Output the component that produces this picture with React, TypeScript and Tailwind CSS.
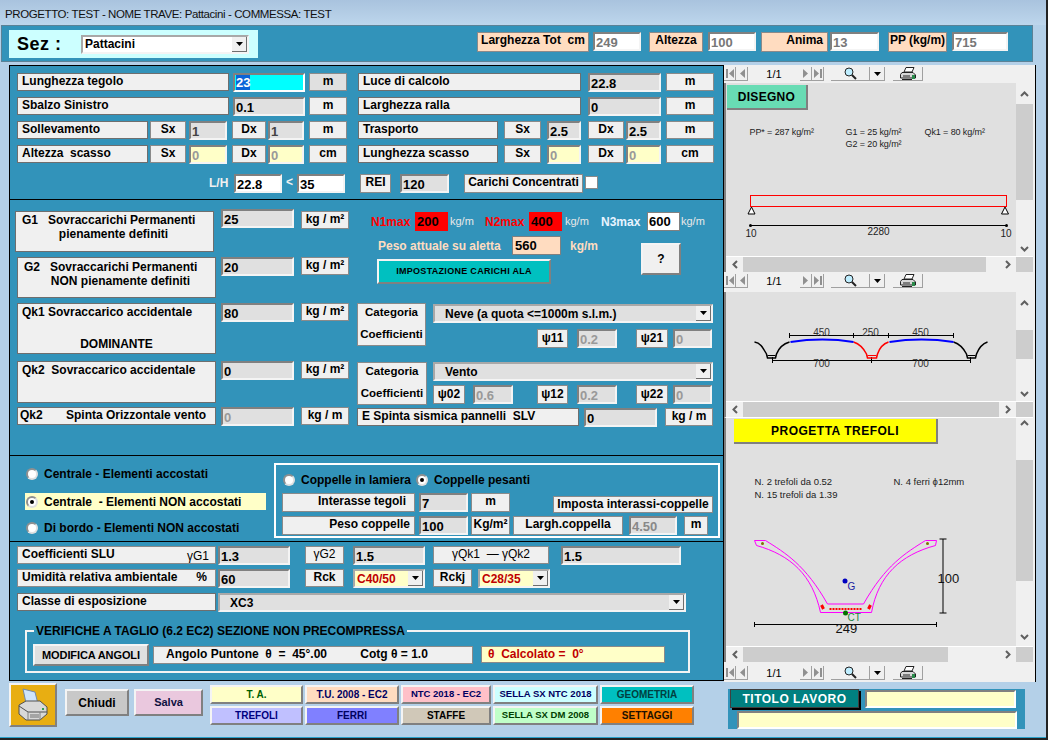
import type { ReactNode } from "react";

const FONT = "font-['Liberation_Sans',Arial,sans-serif]";

function Lbl({ className = "", children }: { className?: string; children?: ReactNode }) {
  return (
    <div className={`shrink-0 h-[18px] bg-[#f0f0f0] border border-[#6e6e6e] pl-[4px] leading-[14px] whitespace-pre overflow-hidden ${className}`}>
      {children}
    </div>
  );
}

function Unit({ className = "", children }: { className?: string; children?: ReactNode }) {
  return (
    <div className={`shrink-0 h-[18px] bg-[#f0f0f0] border border-[#8a8a8a] text-center leading-[14px] whitespace-pre overflow-hidden ${className}`}>
      {children}
    </div>
  );
}

function Val({ className = "", bg = "bg-[#e0e0e0]", color = "text-black", children }: { className?: string; bg?: string; color?: string; children?: ReactNode }) {
  return (
    <div className={`shrink-0 h-[19px] border-2 border-t-[#808080] border-l-[#808080] border-r-[#f4f4f4] border-b-[#f4f4f4] pl-[1px] text-[13px] leading-[17px] overflow-hidden ${bg} ${color} ${className}`}>
      {children}
    </div>
  );
}

function Arrow() {
  return (
    <div className="w-[15px] h-[15px] shrink-0 bg-[#f0f0f0] border-r border-b border-[#6e6e6e] flex items-center justify-center">
      <svg width="7" height="4" viewBox="0 0 7 4"><path d="M0 0h7L3.5 4z" fill="#000" /></svg>
    </div>
  );
}

function Combo({ className = "", text = "text-black pl-[10px]", children }: { className?: string; text?: string; children?: ReactNode }) {
  return (
    <div className={`shrink-0 h-[19px] border-2 border-t-[#a8a8a8] border-l-[#a8a8a8] border-r-[#f4f4f4] border-b-[#f4f4f4] flex items-center justify-between ${className}`}>
      <span className={`text-[12px] ${text}`}>{children}</span>
      <Arrow />
    </div>
  );
}

function Radio({ on = false }: { on?: boolean }) {
  return (
    <div className="w-[12px] h-[12px] shrink-0 rounded-full bg-white border-2 border-t-[#909090] border-l-[#909090] border-r-[#e0e0e0] border-b-[#e0e0e0] flex items-center justify-center">
      {on && <div className="w-[4px] h-[4px] rounded-full bg-black" />}
    </div>
  );
}

function Psi({ className = "", children }: { className?: string; children?: ReactNode }) {
  return (
    <div className={`shrink-0 h-[19px] bg-[#f0f0f0] border border-[#8a8a8a] text-center text-[12px] leading-[17px] ${className}`}>
      <span className="text-[#000]">ψ</span>
      {children}
    </div>
  );
}

function TinyBtn({ d, flip = false }: { d: string; flip?: boolean }) {
  return (
    <div className="w-[12px] h-[14px] bg-[#f0f0f0] border-r border-b border-[#a0a0a0] flex items-center justify-center">
      <svg width="8" height="9" viewBox="0 0 8 9" className={flip ? "-scale-x-100" : ""}><path d={d} fill="#909090" /></svg>
    </div>
  );
}

function Toolbar({ className = "" }: { className?: string }) {
  return (
    <div className={`h-[18px] bg-[#f0f0f0] flex items-center shrink-0 text-black ${className}`}>
      <TinyBtn d="M0 0h2v9H0zM8 0v9L3 4.5z" />
      <TinyBtn d="M7 0v9L2 4.5z" />
      <div className="w-[52px] text-center text-[11px] font-normal">1/1</div>
      <TinyBtn d="M7 0v9L2 4.5z" flip />
      <TinyBtn d="M0 0h2v9H0zM8 0v9L3 4.5z" flip />
      <div className="ml-[7px] w-[39px] h-[14px] bg-[#f0f0f0] border-r border-b border-[#a0a0a0] flex items-center justify-center">
        <svg width="13" height="13" viewBox="0 0 13 13" fill="none">
          <circle cx="5" cy="5" r="4" stroke="#222" fill="#bfeeff" />
          <path d="M8 8l4 4" stroke="#222" strokeWidth="2" />
        </svg>
      </div>
      <div className="w-[15px] h-[14px] bg-[#f0f0f0] border-r border-b border-[#a0a0a0] flex items-center justify-center">
        <svg width="7" height="4" viewBox="0 0 7 4"><path d="M0 0h7L3.5 4z" fill="#000" /></svg>
      </div>
      <div className="ml-[8px] w-[30px] h-[14px] bg-[#f0f0f0] border-r border-b border-[#a0a0a0] flex items-center justify-center">
        <svg width="16" height="13" viewBox="0 0 16 13" fill="none">
          <path d="M6 .5h8L12 5H4z" fill="#fff" stroke="#222" />
          <path d="M2 5.500h11l2.500 2.500v3H.5V7.500z" fill="#d8d8d8" stroke="#222" />
          <path d="M12 8h3v4h-3z" fill="#2a8a4a" />
          <path d="M2 12.500h10M3 9h7" stroke="#222" />
        </svg>
      </div>
    </div>
  );
}

function Chevron({ up = false }: { up?: boolean }) {
  return (
    <svg width="9" height="6" viewBox="0 0 9 6" fill="none" className={up ? "" : "rotate-180"}>
      <path d="M1 5l3.500-3.500L8 5" stroke="#606060" strokeWidth="2" />
    </svg>
  );
}

function HBar({ thumb }: { thumb: string }) {
  return (
    <div className="h-[16px] shrink-0 flex border-t border-white">
      <div className="flex-1 bg-[#f0f0f0] flex items-center">
        <div className="w-[17px] flex justify-center"><svg width="6" height="9" viewBox="0 0 6 9" fill="none"><path d="M5 1 1.500 4.500 5 8" stroke="#606060" strokeWidth="2" /></svg></div>
        <div className="flex-1 h-full"><div className={`h-full bg-[#cdcdcd] ${thumb}`} /></div>
        <div className="w-[17px] flex justify-center"><svg width="6" height="9" viewBox="0 0 6 9" fill="none"><path d="M1 1l3.500 3.500L1 8" stroke="#606060" strokeWidth="2" /></svg></div>
      </div>
      <div className="w-[17px] bg-[#cdcdcd]" />
    </div>
  );
}

function Viewer({ area, scroll, thumb, children }: { area: string; scroll: ReactNode; thumb: string; children: ReactNode }) {
  return (
    <div className={`shrink-0 flex flex-col bg-[#e0e0e0] border-l-2 border-[#808080] ${area}`}>
      <div className="flex-1 flex min-h-0">
        <div className="flex-1 relative overflow-hidden">{children}</div>
        {scroll}
      </div>
      <HBar thumb={thumb} />
    </div>
  );
}

function BeamDrawing() {
  return (
    <svg viewBox="726 83 289 173" className="absolute inset-0 w-full h-full font-normal" fill="none">
      <g fontFamily="'Liberation Sans',Arial,sans-serif" fontSize="9" fill="#222" letterSpacing="-0.1">
        <text x="749" y="135">PP* = 287 kg/m²</text>
        <text x="845" y="135">G1 = 25 kg/m²</text>
        <text x="924" y="135">Qk1 = 80 kg/m²</text>
        <text x="845" y="147">G2 = 20 kg/m²</text>
        <text x="745" y="237" fontSize="10">10</text>
        <text x="867" y="235" fontSize="10">2280</text>
        <text x="1000" y="237" fontSize="10">10</text>
      </g>
      <rect x="750" y="195.500" width="256" height="11" stroke="#f00" />
      <path d="M751 207l-3.500 7h7zM1004.500 207l-3.500 7h7z" stroke="#000" fill="#fff" />
      <path d="M750 225.500h256" stroke="#000" />
      <circle cx="750" cy="225.500" r="1.500" fill="#000" />
      <circle cx="1006" cy="225.500" r="1.500" fill="#000" />
    </svg>
  );
}

function TileDrawing() {
  return (
    <svg viewBox="726 292 289 109" className="absolute inset-0 w-full h-full font-normal" fill="none">
      <g stroke="#000">
        <path d="M789 335.500h164M789 333v5M853 333v5M888 333v5M953 333v5" />
        <path d="M772 360.500h198M772 357v6M871 357v6M970 357v6" />
      </g>
      <path d="M754 342c6 1 8 5 12 12l1 4h8l1-4c2-5 6-10 13-12" stroke="#000" strokeWidth="1.500" />
      <path d="M767 355.500h8" stroke="#000" />
      <path d="M953 342c6 2 10 6 13 12l1 4h8l1-4c2-5 5-10 11-12" stroke="#000" strokeWidth="1.500" />
      <path d="M967 355.500h8" stroke="#000" />
      <path d="M853 342c6 2 10 6 13 12l1 4h9l1-4c2-6 5-10 11-12" stroke="#f00" strokeWidth="1.500" />
      <path d="M867 355.500h9" stroke="#f00" />
      <path d="M790 342c20-3 44-3 63 0M889 342c20-3 44-3 64 0" stroke="#00f" strokeWidth="2" />
      <g fontFamily="'Liberation Sans',Arial,sans-serif" fontSize="10" fill="#333" textAnchor="middle">
        <text x="821" y="336">450</text>
        <text x="870" y="336">250</text>
        <text x="920" y="336">450</text>
        <text x="821" y="367">700</text>
        <text x="920" y="367">700</text>
      </g>
    </svg>
  );
}

function SectionDrawing() {
  return (
    <svg viewBox="726 418 289 228" className="absolute inset-0 w-full h-full font-normal" fill="none">
      <g fontFamily="'Liberation Sans',Arial,sans-serif" fontSize="9.500" fill="#222">
        <text x="754" y="485">N. 2 trefoli da 0.52</text>
        <text x="893" y="485">N. 4 ferri ϕ12mm</text>
        <text x="754" y="498">N. 15 trefoli da 1.39</text>
      </g>
      <path
        d="M754 540.500h11C785 553 805 565 827 604h36C885 565 905 553 925 540.500h11l-1 5C900 555 878 575 871 612.500h-51C812 575 790 555 756 545.500z"
        stroke="#f0f"
      />
      <circle cx="762" cy="543.500" r="1.500" fill="#807000" />
      <circle cx="927" cy="543.500" r="1.500" fill="#807000" />
      <path d="M829 609h32" stroke="#f00" strokeWidth="2" strokeDasharray="2 1" />
      <path d="M821 605l2 4M870 605l-2 4" stroke="#f00" strokeWidth="3" />
      <path d="M942.500 539v74M939 539h7M939 613h7M754 624.500h182M754 622v5M936 622v5" stroke="#000" />
      <circle cx="844.500" cy="581" r="2.500" fill="#0000c0" />
      <circle cx="845" cy="613" r="2.500" fill="#007000" />
      <g fontFamily="'Liberation Sans',Arial,sans-serif">
        <text x="847" y="590" fontSize="10" fill="#2020a0">G</text>
        <text x="847" y="621" fontSize="10" fill="#208040">CT</text>
        <text x="937" y="583" fontSize="13" fill="#111">100</text>
        <text x="835" y="633" fontSize="13" fill="#111">249</text>
      </g>
    </svg>
  );
}

function NavBtn({ className, children }: { className: string; children: ReactNode }) {
  return (
    <div className={`h-[19px] border-2 border-t-[#f4f4f4] border-l-[#f4f4f4] border-r-[#808080] border-b-[#808080] flex items-center justify-center whitespace-nowrap ${className}`}>
      {children}
    </div>
  );
}

export default function App() {
  return (
    <div className={`${FONT} w-[1048px] h-[740px] overflow-hidden bg-[#b4d0e8] text-[12px] font-bold text-black flex flex-col border-b-2 border-r-2 border-[#222] shadow-[inset_0_-1px_0_#2aa0c8]`}>
      {/* title bar */}
      <div className="h-[25px] shrink-0 bg-gradient-to-b from-[#a9c3de] to-[#bdd6ec] pl-[5px] pt-[5px] text-[11.500px] tracking-[-0.4px] font-normal text-[#111] leading-[18px]">
        PROGETTO: TEST - NOME TRAVE: Pattacini - COMMESSA: TEST
      </div>

      {/* top band */}
      <div className="h-[37px] w-[1032px] ml-[1px] shrink-0 bg-[#3293ba] border border-[#5c8296] flex items-start">
        <div className="ml-[7px] mt-[4px] w-[249px] h-[28px] bg-[#ccffff] flex items-center">
          <span className="ml-[8px] w-[64px] text-[18px] tracking-[0.5px]">Sez :</span>
          <Combo className="w-[168px] bg-white" text="text-black pl-[2px]">Pattacini</Combo>
        </div>
        <Unit className="ml-[219px] mt-[6px] w-[112px] !h-[20px] !bg-[#ffdcc0]">Larghezza Tot  cm</Unit>
        <Val className="ml-[4px] mt-[6px] w-[48px]" bg="bg-white" color="text-[#777]">249</Val>
        <Unit className="ml-[8px] mt-[6px] w-[54px] !h-[20px] !bg-[#ffdcc0]">Altezza</Unit>
        <Val className="ml-[5px] mt-[6px] w-[48px]" bg="bg-white" color="text-[#777]">100</Val>
        <div className="ml-[5px] mt-[6px] w-[67px] h-[20px] bg-[#ffdcc0] border border-[#8a8a8a] text-right pr-[4px] leading-[14px]">Anima</div>
        <Val className="ml-[2px] mt-[6px] w-[49px]" bg="bg-white" color="text-[#777]">13</Val>
        <Unit className="ml-[9px] mt-[6px] w-[59px] !h-[20px] !bg-[#ffdcc0]">PP (kg/m)</Unit>
        <Val className="ml-[5px] mt-[6px] w-[56px]" bg="bg-white" color="text-[#777]">715</Val>
      </div>

      <div className="h-[617px] mt-[3px] shrink-0 flex items-start">
        {/* left column */}
        <div className="ml-[9px] w-[715px] shrink-0 flex flex-col">
          {/* dimensions */}
          <div className="h-[134px] bg-[#3293ba] border border-b-0 border-black pl-[7px] pt-[7px] flex flex-col gap-[6px]">
            <div className="flex h-[18px]">
              <Lbl className="w-[212px]">Lunghezza tegolo</Lbl>
              <div className="ml-[4px] w-[72px] h-[19px] bg-[#00ffff] border-2 border-t-[#808080] border-l-[#808080] border-r-white border-b-white pl-[1px] text-[13px] leading-[15px] text-white">
                <span className="bg-[#0a64d8]">23</span>
              </div>
              <Unit className="ml-[4px] w-[38px] !bg-[#e0e0e0]">m</Unit>
              <Lbl className="ml-[11px] w-[223px]">Luce di calcolo</Lbl>
              <Val className="ml-[7px] w-[73px]">22.8</Val>
              <Unit className="ml-[5px] w-[48px]">m</Unit>
            </div>
            <div className="flex h-[18px]">
              <Lbl className="w-[212px]">Sbalzo Sinistro</Lbl>
              <Val className="ml-[4px] w-[72px]">0.1</Val>
              <Unit className="ml-[4px] w-[38px]">m</Unit>
              <Lbl className="ml-[11px] w-[223px]">Larghezza ralla</Lbl>
              <Val className="ml-[7px] w-[73px]">0</Val>
              <Unit className="ml-[5px] w-[48px]">m</Unit>
            </div>
            <div className="flex h-[18px]">
              <Lbl className="w-[131px]">Sollevamento</Lbl>
              <Unit className="ml-[2px] w-[36px]">Sx</Unit>
              <Val className="ml-[3px] w-[38px]" color="text-[#444]">1</Val>
              <Unit className="ml-[5px] w-[34px]">Dx</Unit>
              <Val className="ml-[2px] w-[36px]" color="text-[#444]">1</Val>
              <Unit className="ml-[5px] w-[38px]">m</Unit>
              <Lbl className="ml-[11px] w-[140px]">Trasporto</Lbl>
              <Unit className="ml-[6px] w-[37px]">Sx</Unit>
              <Val className="ml-[6px] w-[34px]">2.5</Val>
              <Unit className="ml-[7px] w-[36px]">Dx</Unit>
              <Val className="ml-[2px] w-[35px]">2.5</Val>
              <Unit className="ml-[5px] w-[48px]">m</Unit>
            </div>
            <div className="flex h-[18px]">
              <Lbl className="w-[131px]">Altezza  scasso</Lbl>
              <Unit className="ml-[2px] w-[36px]">Sx</Unit>
              <Val className="ml-[3px] w-[38px]" bg="bg-[#ffffc8]" color="text-[#999]">0</Val>
              <Unit className="ml-[5px] w-[34px]">Dx</Unit>
              <Val className="ml-[2px] w-[36px]" bg="bg-[#ffffc8]" color="text-[#999]">0</Val>
              <Unit className="ml-[5px] w-[38px]">cm</Unit>
              <Lbl className="ml-[11px] w-[140px]">Lunghezza scasso</Lbl>
              <Unit className="ml-[6px] w-[37px]">Sx</Unit>
              <Val className="ml-[6px] w-[34px]" bg="bg-[#ffffc8]" color="text-[#999]">0</Val>
              <Unit className="ml-[7px] w-[36px]">Dx</Unit>
              <Val className="ml-[2px] w-[35px]" bg="bg-[#ffffc8]" color="text-[#999]">0</Val>
              <Unit className="ml-[5px] w-[48px]">cm</Unit>
            </div>
            <div className="flex items-start mt-[5px]">
              <span className="ml-[192px] w-[25px] text-[#f0f0f0] leading-[19px]">L/H</span>
              <Val className="w-[48px]" bg="bg-white">22.8</Val>
              <span className="w-[15px] text-center text-[#f0f0f0] leading-[17px]">&lt;</span>
              <Val className="w-[48px]" bg="bg-white">35</Val>
              <Unit className="ml-[15px] w-[31px] !h-[19px]">REI</Unit>
              <Val className="ml-[9px] w-[49px]">120</Val>
              <Unit className="ml-[15px] w-[119px] !h-[19px]">Carichi Concentrati</Unit>
              <div className="ml-[2px] mt-[2px] w-[13px] h-[13px] bg-white border border-[#8a8a8a]" />
            </div>
          </div>

          {/* loads */}
          <div className="h-[256px] bg-[#3293ba] border border-b-0 border-black flex items-start">
            <div className="w-[347px] shrink-0 flex flex-col">
              <div className="mt-[9px] flex items-start">
                <div className="ml-[5px] mt-[2px] w-[199px] h-[41px] bg-[#f0f0f0] border border-[#6e6e6e] whitespace-pre leading-[14px] pt-[1px]">
                  <div className="pl-[6px]">G1   Sovraccarichi Permanenti</div>
                  <div className="text-center pr-[2px]">pienamente definiti</div>
                </div>
                <Val className="ml-[7px] w-[73px]">25</Val>
                <Unit className="ml-[7px] mt-[2px] w-[48px]">kg / m²</Unit>
              </div>
              <div className="mt-[5px] flex items-start">
                <div className="ml-[7px] w-[199px] h-[41px] bg-[#f0f0f0] border border-[#6e6e6e] whitespace-pre leading-[14px] pt-[2px]">
                  <div className="pl-[6px]">G2   Sovraccarichi Permanenti</div>
                  <div className="text-center pl-[8px]">NON pienamente definiti</div>
                </div>
                <Val className="ml-[5px] w-[73px]">20</Val>
                <Unit className="ml-[7px] w-[48px]">kg / m²</Unit>
              </div>
              <div className="mt-[5px] flex items-start">
                <div className="ml-[7px] w-[199px] h-[51px] bg-[#f0f0f0] border border-[#6e6e6e] whitespace-pre leading-[14px] pt-[1px]">
                  <div className="pl-[4px]">Qk1 Sovraccarico accidentale</div>
                  <div className="text-center mt-[18px]">DOMINANTE</div>
                </div>
                <Val className="ml-[5px] w-[73px]">80</Val>
                <Unit className="ml-[7px] w-[48px]">kg / m²</Unit>
              </div>
              <div className="mt-[7px] flex items-start">
                <div className="ml-[7px] w-[199px] h-[42px] bg-[#f0f0f0] border border-[#6e6e6e] whitespace-pre leading-[14px] pt-[1px]">
                  <div className="pl-[4px]">Qk2  Sovraccarico accidentale</div>
                </div>
                <Val className="ml-[5px] w-[73px]">0</Val>
                <Unit className="ml-[7px] w-[48px]">kg / m²</Unit>
              </div>
              <div className="mt-[4px] flex items-start">
                <Lbl className="ml-[7px] w-[199px] !pl-[2px]">Qk2       Spinta Orizzontale vento</Lbl>
                <Val className="ml-[5px] w-[73px]" color="text-[#999]">0</Val>
                <Unit className="ml-[7px] w-[48px]">kg / m</Unit>
              </div>
            </div>

            <div className="w-[357px] shrink-0 flex flex-col">
              <div className="mt-[12px] flex items-center h-[19px]">
                <span className="ml-[14px] w-[44px] text-[#f00]">N1max</span>
                <div className="w-[33px] h-[19px] bg-[#f00] leading-[19px] pl-[2px] text-[13px]">200</div>
                <span className="ml-[2px] w-[35px] font-normal text-[#e8e8e8] text-[11px]">kg/m</span>
                <span className="w-[44px] text-[#f00]">N2max</span>
                <div className="w-[33px] h-[19px] bg-[#f00] leading-[19px] pl-[2px] text-[13px]">400</div>
                <span className="ml-[3px] w-[36px] font-normal text-[#e8e8e8] text-[11px]">kg/m</span>
                <span className="w-[46px] text-[#e8f4ff]">N3max</span>
                <div className="w-[33px] h-[19px] bg-white border border-[#808080] leading-[17px] pl-[1px] text-[13px]">600</div>
                <span className="ml-[1px] font-normal text-[#e8e8e8] text-[11px]">kg/m</span>
              </div>
              <div className="flex items-start">
                <div className="w-[275px] shrink-0 flex flex-col">
                  <div className="mt-[5px] flex items-center h-[19px]">
                    <span className="ml-[21px] w-[134px] text-[#ffdcc0]">Peso attuale su aletta</span>
                    <div className="w-[49px] h-[19px] bg-[#ffdcc0] border border-[#808080] pl-[2px] leading-[17px] text-[13px]">560</div>
                    <span className="ml-[9px] text-[#ffdcc0]">kg/m</span>
                  </div>
                  <div className="ml-[20px] mt-[4px] w-[174px] h-[25px] bg-[#00c0c0] border-2 border-t-[#f4f4f4] border-l-[#f4f4f4] border-r-[#808080] border-b-[#808080] flex items-center justify-center text-[9px] tracking-[0.3px]">
                    IMPOSTAZIONE CARICHI ALA
                  </div>
                </div>
                <div className="ml-[9px] mt-[12px] w-[40px] h-[32px] bg-[#f0f0f0] border-2 border-t-[#f4f4f4] border-l-[#f4f4f4] border-r-[#808080] border-b-[#808080] flex items-center justify-center">?</div>
              </div>

              <div className="mt-[19px] flex items-start">
                <div className="w-[69px] h-[43px] bg-[#f0f0f0] border border-[#8a8a8a] text-center flex flex-col justify-between pb-[2px] shrink-0 text-[11.500px]">
                  <span>Categoria</span>
                  <span>Coefficienti</span>
                </div>
                <div className="ml-[7px] flex flex-col">
                  <Combo className="w-[280px] mt-[1px] bg-[#e0e0e0]" text="pl-[10px]">Neve (a quota &lt;=1000m s.l.m.)</Combo>
                  <div className="mt-[6px] flex">
                    <Psi className="ml-[104px] w-[31px]">11</Psi>
                    <Val className="ml-[9px] w-[40px]" color="text-[#999]">0.2</Val>
                    <Psi className="ml-[19px] w-[32px]">21</Psi>
                    <Val className="ml-[5px] w-[39px]" color="text-[#999]">0</Val>
                  </div>
                </div>
              </div>
              <div className="mt-[14px] flex items-start">
                <div className="w-[70px] h-[43px] bg-[#f0f0f0] border border-[#8a8a8a] text-center flex flex-col justify-between pb-[2px] shrink-0 text-[11.500px]">
                  <span>Categoria</span>
                  <span>Coefficienti</span>
                </div>
                <div className="ml-[6px] flex flex-col">
                  <Combo className="w-[280px] bg-[#e0e0e0]" text="pl-[10px]">Vento</Combo>
                  <div className="mt-[4px] flex">
                    <Psi className="w-[32px]">02</Psi>
                    <Val className="ml-[8px] w-[40px]" color="text-[#999]">0.6</Val>
                    <Psi className="ml-[24px] w-[31px]">12</Psi>
                    <Val className="ml-[9px] w-[40px]" color="text-[#999]">0.2</Val>
                    <Psi className="ml-[19px] w-[32px]">22</Psi>
                    <Val className="ml-[5px] w-[39px]" color="text-[#999]">0</Val>
                  </div>
                </div>
              </div>
              <div className="mt-[3px] flex items-start">
                <Lbl className="w-[222px]">E Spinta sismica pannelli  SLV</Lbl>
                <Val className="ml-[5px] w-[73px]">0</Val>
                <Unit className="ml-[8px] w-[48px]">kg / m</Unit>
              </div>
            </div>
          </div>

          {/* support type */}
          <div className="h-[86px] bg-[#3293ba] border border-b-0 border-black flex items-start">
            <div className="w-[264px] shrink-0 flex flex-col">
              <div className="ml-[16px] mt-[11px] h-[14px] flex items-center gap-[6px]">
                <Radio />
                <span>Centrale - Elementi accostati</span>
              </div>
              <div className="ml-[15px] mt-[12px] w-[241px] h-[17px] bg-[#ffffc8] pl-[1px] flex items-center gap-[6px]">
                <Radio on />
                <span className="whitespace-pre">Centrale  - Elementi NON accostati</span>
              </div>
              <div className="ml-[16px] mt-[11px] h-[14px] flex items-center gap-[6px]">
                <Radio />
                <span>Di bordo - Elementi NON accostati</span>
              </div>
            </div>
            <div className="mt-[7px] w-[446px] h-[75px] border-2 border-white flex flex-col shrink-0">
              <div className="mt-[8px] ml-[7px] h-[14px] flex items-center">
                <Radio />
                <span className="ml-[6px] w-[115px]">Coppelle in lamiera</span>
                <Radio on />
                <span className="ml-[6px]">Coppelle pesanti</span>
              </div>
              <div className="mt-[6px] ml-[6px] flex items-start">
                <Unit className="w-[133px] !h-[19px] pr-[8px] !text-right">Interasse tegoli</Unit>
                <Val className="ml-[4px] w-[49px]">7</Val>
                <Unit className="ml-[3px] w-[39px] !h-[19px]">m</Unit>
                <Unit className="ml-[43px] mt-[3px] w-[160px] !h-[17px]">Imposta interassi-coppelle</Unit>
              </div>
              <div className="mt-[3px] ml-[6px] flex items-start">
                <Unit className="w-[133px] !h-[19px] pr-[4px] !text-right">Peso coppelle</Unit>
                <Val className="ml-[4px] w-[49px]">100</Val>
                <Unit className="ml-[3px] w-[39px] !h-[19px]">Kg/m²</Unit>
                <Unit className="ml-[3px] w-[110px] !h-[19px]">Largh.coppella</Unit>
                <Val className="ml-[6px] w-[48px]" color="text-[#888]">4.50</Val>
                <Unit className="ml-[7px] w-[24px] !h-[19px]">m</Unit>
              </div>
            </div>
          </div>

          {/* SLU coefficients and shear check */}
          <div className="h-[140px] bg-[#3293ba] border border-black pl-[7px] pt-[4px] flex flex-col">
            <div className="flex items-start">
              <div className="w-[199px] h-[18px] shrink-0 bg-[#f0f0f0] border border-[#8a8a8a] pl-[4px] pr-[6px] flex justify-between leading-[14px]">
                <span>Coefficienti SLU</span>
                <span className="font-normal mt-[2px]">γG1</span>
              </div>
              <Val className="ml-[2px] w-[72px]">1.3</Val>
              <Unit className="ml-[15px] w-[39px] font-normal">γG2</Unit>
              <Val className="ml-[9px] w-[72px]">1.5</Val>
              <Unit className="ml-[8px] w-[116px] font-normal">γQk1  — γQk2</Unit>
              <Val className="ml-[12px] w-[120px]">1.5</Val>
            </div>
            <div className="mt-[4px] flex items-start">
              <div className="w-[199px] h-[18px] shrink-0 bg-[#f0f0f0] border border-[#8a8a8a] pl-[4px] pr-[8px] flex justify-between leading-[14px]">
                <span>Umidità relativa ambientale</span>
                <span>%</span>
              </div>
              <Val className="ml-[2px] w-[72px]">60</Val>
              <Unit className="ml-[15px] w-[39px]">Rck</Unit>
              <Combo className="ml-[9px] w-[72px] bg-[#ffffc8]" text="pl-[2px] text-[#c00000]">C40/50</Combo>
              <Unit className="ml-[8px] w-[39px]">Rckj</Unit>
              <Combo className="ml-[6px] w-[72px] bg-[#ffffc8]" text="pl-[2px] text-[#c00000]">C28/35</Combo>
            </div>
            <div className="mt-[5px] flex items-start">
              <Lbl className="w-[199px]">Classe di esposizione</Lbl>
              <Combo className="ml-[2px] w-[468px] bg-[#e0e0e0]" text="pl-[10px]">XC3</Combo>
            </div>
            <fieldset className="mt-[14px] ml-[8px] w-[665px] h-[47px] border-2 border-[#f4f4f4] pl-[6px] pt-[8px] flex items-start">
              <legend className="ml-[1px] px-[2px] leading-[10px]">VERIFICHE A TAGLIO (6.2 EC2) SEZIONE NON PRECOMPRESSA</legend>
              <div className="w-[116px] h-[22px] bg-[#e0e0e0] border-2 border-t-[#f4f4f4] border-l-[#f4f4f4] border-r-[#808080] border-b-[#808080] flex items-center justify-center text-[11px] tracking-[-0.1px]">MODIFICA ANGOLI</div>
              <Unit className="ml-[4px] mt-[2px] w-[320px] !text-left pl-[12px]">Angolo Puntone  θ  =  45°.00          Cotg θ = 1.0</Unit>
              <Unit className="ml-[8px] mt-[2px] w-[184px] !h-[17px] !bg-[#ffffc8] !text-left pl-[6px] text-[#c00000]">θ  Calcolato =  0°</Unit>
            </fieldset>
          </div>
        </div>

        {/* report viewers */}
        <div className="w-[312px] shrink-0 flex flex-col bg-[#f0f0f0] border-r border-black pr-[2px]">
          <Toolbar />
          <Viewer area="h-[189px]" thumb="w-[95%]" scroll={
            <div className="w-[17px] shrink-0 bg-[#f0f0f0] flex flex-col items-center">
              <div className="h-[21px] flex items-center"><Chevron up /></div>
              <div className="w-full h-[96px] bg-[#cdcdcd]" />
              <div className="flex-1 flex items-end pb-[4px]"><Chevron /></div>
            </div>
          }>
            <BeamDrawing />
            <div className="relative ml-[1px] mt-[2px] w-[81px] h-[25px] bg-[#68dcb4] border-r-2 border-b-2 border-[#808080] flex items-center justify-center tracking-[0.3px]">DISEGNO</div>
          </Viewer>
          <Toolbar />
          <Viewer area="h-[125px] mt-[2px]" thumb="w-[100%]" scroll={
            <div className="w-[17px] shrink-0 bg-[#f0f0f0] flex flex-col items-center">
              <div className="h-[38px] pt-[8px]"><Chevron up /></div>
              <div className="w-full h-[29px] bg-[#cdcdcd]" />
              <div className="flex-1 flex items-end pb-[4px]"><Chevron /></div>
            </div>
          }>
            <TileDrawing />
          </Viewer>
          <Viewer area="h-[245px] border-t border-t-white" thumb="w-[80%]" scroll={
            <div className="w-[17px] shrink-0 bg-[#f0f0f0] flex flex-col items-center">
              <div className="h-[42px] pt-[2px]"><Chevron up /></div>
              <div className="w-full h-[121px] bg-[#cdcdcd]" />
              <div className="flex-1 flex items-end pb-[6px]"><Chevron /></div>
            </div>
          }>
            <SectionDrawing />
            <div className="relative ml-[8px] mt-[1px] w-[204px] h-[25px] bg-[#ffff00] border-r-2 border-b-2 border-[#808080] flex items-center justify-center tracking-[0.5px]">PROGETTA TREFOLI</div>
          </Viewer>
          <Toolbar className="mt-[2px]" />
        </div>
      </div>

      {/* bottom buttons */}
      <div className="flex items-start shrink-0">
        <div className="ml-[9px] mt-[1px] w-[48px] h-[44px] bg-[#e8ae12] border-2 border-t-[#f4f4f4] border-l-[#f4f4f4] border-r-[#808080] border-b-[#808080] flex items-center justify-center">
          <svg width="34" height="34" viewBox="0 0 34 34" fill="none">
            <path d="M7 1l12 3 3 12-12-1z" fill="#cfe4fb" stroke="#7088a8" />
            <path d="M3 17l7-4h14l7 6v7l-7 6H10l-7-6z" fill="#d8d8d8" stroke="#505050" />
            <path d="M3 18l9 6h19" stroke="#505050" />
            <path d="M12 24v8M24 24v8" stroke="#808080" />
            <path d="M14 27h9M14 29h9" stroke="#707070" />
            <path d="M26 21h2" stroke="#30a050" strokeWidth="2" />
          </svg>
        </div>
        <div className="ml-[8px] mt-[7px] w-[64px] h-[27px] bg-[#c8c8c8] border-2 border-t-[#f4f4f4] border-l-[#f4f4f4] border-r-[#808080] border-b-[#808080] flex items-center justify-center">Chiudi</div>
        <div className="ml-[5px] mt-[7px] w-[69px] h-[27px] bg-[#eac8de] border-2 border-t-[#f4f4f4] border-l-[#f4f4f4] border-r-[#808080] border-b-[#808080] flex items-center justify-center text-[11px] text-[#101040]">Salva</div>
        <div className="ml-[7px] mt-[3px] grid grid-cols-[93px_94px_90px_105px_94px] gap-x-[2px] gap-y-[2px]">
          <NavBtn className="bg-[#ffffc8] text-[#006000] text-[10px]">T. A.</NavBtn>
          <NavBtn className="bg-[#ffdcc0] text-[#000060] text-[10px]">T.U. 2008 - EC2</NavBtn>
          <NavBtn className="bg-[#ffc0c8] text-[#000060] text-[9.500px]">NTC 2018 - EC2</NavBtn>
          <NavBtn className="bg-[#ccffff] text-[#000060] text-[9.500px]">SELLA SX NTC 2018</NavBtn>
          <NavBtn className="bg-[#00c0c0] text-[#004040] text-[10px]">GEOMETRIA</NavBtn>
          <NavBtn className="bg-[#c0c0ff] text-[#000080] text-[10px]">TREFOLI</NavBtn>
          <NavBtn className="bg-[#8080ff] text-[#000060] text-[10px]">FERRI</NavBtn>
          <NavBtn className="bg-[#d0c8b8] text-[10px]">STAFFE</NavBtn>
          <NavBtn className="bg-[#c0ffc8] text-[#004000] text-[9.500px]">SELLA SX DM 2008</NavBtn>
          <NavBtn className="bg-[#ff8000] text-[#201000] text-[10px]">SETTAGGI</NavBtn>
        </div>
        <div className="ml-[34px] mt-[7px] w-[297px] h-[40px] bg-[#3293ba] flex flex-col">
          <div className="flex">
            <div className="ml-[2px] w-[129px] h-[19px] bg-[#008080] border border-[#404040] shadow-[2px_2px_0_#000] flex items-center justify-center text-white tracking-[0.5px]">TITOLO LAVORO</div>
            <div className="ml-[6px] mt-[1px] w-[151px] h-[18px] bg-[#ffffc8] border-2 border-t-[#808080] border-l-[#808080] border-r-white border-b-white" />
          </div>
          <div className="ml-[9px] mt-[3px] w-[280px] h-[18px] bg-[#ffffc8] border-2 border-t-[#808080] border-l-[#808080] border-r-white border-b-white" />
        </div>
      </div>
    </div>
  );
}
